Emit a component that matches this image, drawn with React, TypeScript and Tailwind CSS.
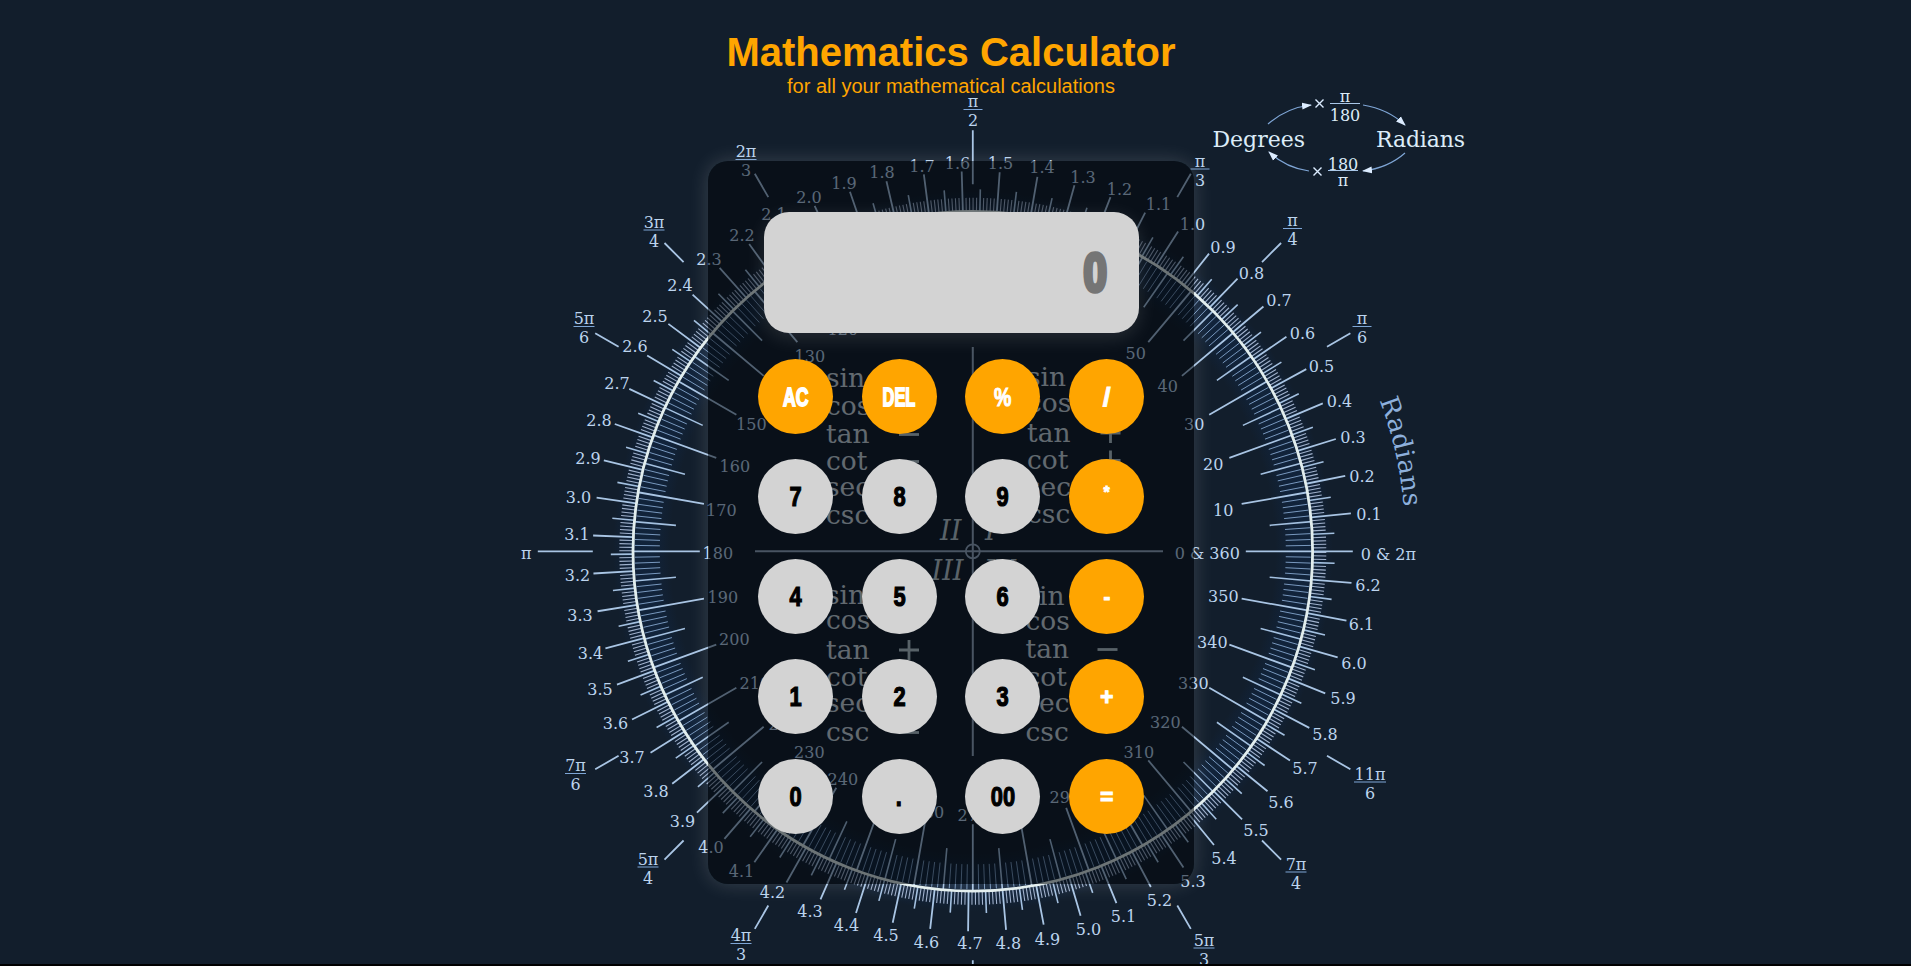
const CX = 972.8;
const CY = 551.3;

type Label = [string, number, number];

const radianLabels: Label[] = [
  ["1.5", 1000.5, 169], ["1.4", 1042, 173.5], ["1.3", 1083, 183], ["1.2", 1119.5, 195], ["1.1", 1158.5, 210.5], ["1.0", 1192.5, 230.5],
  ["0.9", 1223, 253], ["0.8", 1251.5, 279.5], ["0.7", 1279, 306.5], ["0.6", 1302.5, 339], ["0.5", 1321.5, 372], ["0.4", 1339.5, 407],
  ["0.3", 1353, 443.5], ["0.2", 1362, 482], ["0.1", 1369, 520], ["6.2", 1368, 591.5], ["6.1", 1361.5, 630.5], ["6.0", 1354, 669],
  ["5.9", 1343, 704.5], ["5.8", 1325, 740], ["5.7", 1305, 774.5], ["5.6", 1281, 808], ["5.5", 1256, 836.5], ["5.4", 1224, 864],
  ["5.3", 1193, 887], ["5.2", 1159.5, 906], ["5.1", 1123.5, 922.5], ["5.0", 1088.5, 935], ["4.9", 1047.5, 945], ["4.8", 1008.5, 949.5],
  ["4.7", 970, 949.5], ["4.6", 926.5, 948.5], ["4.5", 886, 941.5], ["4.4", 846.5, 931.5], ["4.3", 810, 917.5], ["4.2", 772.5, 898.5],
  ["4.1", 741.5, 877], ["4.0", 711, 853.5], ["3.9", 682.5, 827], ["3.8", 656, 797.5], ["3.7", 632, 763.5], ["3.6", 615.5, 729],
  ["3.5", 600, 695], ["3.4", 590.5, 659], ["3.3", 580, 621], ["3.2", 577.5, 581.5], ["3.1", 577, 540], ["3.0", 578.5, 503],
  ["2.9", 588, 464], ["2.8", 599, 426], ["2.7", 617, 389], ["2.6", 635, 352], ["2.5", 655, 322.5], ["2.4", 680, 291.5],
  ["2.3", 709, 265.5], ["2.2", 742, 241.5], ["2.1", 774, 220], ["2.0", 809, 203.5], ["1.9", 844, 189], ["1.8", 882, 178],
  ["1.7", 922, 172], ["1.6", 957.5, 169.5],
];

const degreeLabels: Label[] = [
  ["50", 1136, 359], ["40", 1168, 392], ["30", 1194.5, 430.5], ["20", 1213.5, 470], ["10", 1223.5, 516],
  ["0 & 360", 1207.5, 559], ["350", 1223.5, 602], ["340", 1212.5, 648.5], ["330", 1193.5, 689], ["320", 1165.5, 728.5], ["310", 1139, 758],
  ["290", 1065, 803], ["270", 973, 821], ["250", 929, 818], ["240", 843, 785], ["230", 809.5, 758], ["220", 784, 730], ["210", 755, 689], ["200", 734.5, 645],
  ["190", 723, 603.5], ["180", 718, 559], ["170", 721.5, 516.5], ["160", 735, 472], ["150", 751.5, 430.5], ["130", 810, 362.5], ["120", 843, 335],
  ["0 & 2π", 1388.5, 560], ["π", 526.5, 559],
];

const fractions: [string, string, number, number][] = [
  ["π", "2", 973, 109], ["2π", "3", 746, 159], ["3π", "4", 654, 229.5], ["5π", "6", 584, 326],
  ["7π", "6", 575.5, 773], ["5π", "4", 648, 866.5], ["4π", "3", 741, 943], ["5π", "3", 1204, 947.5],
  ["7π", "4", 1296, 871.5], ["11π", "6", 1370, 781.5], ["π", "6", 1362, 326], ["π", "4", 1292.5, 228], ["π", "3", 1200, 168.5],
];

const trig = ["sin", "cos", "tan", "cot", "sec", "csc"];
const trigColumns = [
  { x: 826, ys: [387, 414.5, 443, 470, 496, 524], signs: ["", "", "−", "−", "", ""], sx: 909 },
  { x: 1027, ys: [386, 411.5, 441.5, 469, 495.5, 522.5], signs: ["", "", "+", "+", "", ""], sx: 1110.5 },
  { x: 826, ys: [604, 629, 658.5, 686, 712, 741], signs: ["", "", "+", "", "", "−"], sx: 909 },
  { x: 1025.5, ys: [604.5, 629.5, 658, 686, 712, 740.5], signs: ["", "", "−", "", "", ""], sx: 1107.5 },
];

function tick(a: number, r1: number, r2: number) {
  const c = Math.cos(a);
  const s = Math.sin(a);
  return `M${(CX + r1 * c).toFixed(2)} ${(CY - r1 * s).toFixed(2)}L${(CX + r2 * c).toFixed(2)} ${(CY - r2 * s).toFixed(2)}`;
}

function buildTicks() {
  let minor = "";
  let fine = "";
  let mid = "";
  let major = "";
  for (let d = 0; d < 360; d++) {
    const a = (d * Math.PI) / 180;
    if (d % 10 === 0) major += tick(a, 273, 340);
    else if (d % 5 === 0) mid += tick(a, 298, 340);
    else minor += tick(a, 313, 338);
  }
  for (let i = 0; i <= 628; i++) {
    const a = i / 100;
    if (i % 10 === 0) major += tick(a, 340, 380);
    else if (i % 5 === 0) mid += tick(a, 340, 362);
    else fine += tick(a, 340, 353.5);
  }
  [30, 45, 60, 120, 135, 150, 210, 225, 240, 270, 300, 315, 330].forEach((d) => {
    major += tick((d * Math.PI) / 180, 409, 436);
  });
  major += tick(Math.PI / 2, 367, 421) + tick(Math.PI, 380, 435);
  return { minor, fine, mid, major };
}

const ticks = buildTicks();

function UnitCircle() {
  return (
    <svg className="absolute inset-0 h-[964px] w-full" viewBox="0 0 1911 964" fontFamily="'DejaVu Serif', serif" fill="#bcd4ee">
      <defs>
        <marker id="tip" viewBox="0 0 10 8" refX="9" refY="4" markerWidth="10" markerHeight="8" markerUnits="userSpaceOnUse" orient="auto">
          <path d="M0 0.5L10 4L0 7.5z" fill="#dcecff" />
        </marker>
        <radialGradient id="halo" gradientUnits="userSpaceOnUse" cx={CX} cy={CY} r="360">
          <stop offset="0.84" stopColor="#0f2f5c" stopOpacity="0" />
          <stop offset="0.89" stopColor="#0f2f5c" stopOpacity="0.3" />
          <stop offset="0.96" stopColor="#0f2f5c" stopOpacity="0.3" />
          <stop offset="1" stopColor="#0f2f5c" stopOpacity="0" />
        </radialGradient>
      </defs>
      <circle cx={CX} cy={CY} r="360" fill="url(#halo)" />
      <g fill="none">
        <path d={ticks.minor} stroke="#7898be" strokeWidth="1" />
        <path d={ticks.fine} stroke="#a0b1cc" strokeWidth="1.1" />
        <path d={ticks.mid} stroke="#a3c0e0" strokeWidth="1.6" />
        <path d={ticks.major} stroke="#a9c5e4" strokeWidth="1.8" />
        <circle cx={CX} cy={CY} r="339.8" stroke="#e2eeee" strokeWidth="2.8" />
        <path d="M755 551.3H1163M972.8 347V756" stroke="#98acc4" strokeWidth="2" />
        <circle cx={CX} cy={CY} r="7" stroke="#98acc4" strokeWidth="1.8" />
      </g>

      <g fontSize="16" textAnchor="middle">
        {radianLabels.map(([t, x, y]) => (
          <text key={t} x={x} y={y - 0.2}>{t}</text>
        ))}
        {degreeLabels.map(([t, x, y]) => (
          <text key={t} x={x - 0.2} y={y - 0.4}>{t}</text>
        ))}
        {fractions.map(([n, d, x, y]) => (
          <g key={n + d}>
            <text x={x} y={y - 2}>{n}</text>
            <path d={`M${x - (n.length === 3 ? 16 : n.length === 2 ? 10.5 : 9.5)} ${y + 0.5}h${n.length === 3 ? 32 : n.length === 2 ? 21 : 19}`} stroke="#7ea6d6" />
            <text x={x} y={y + 17}>{d}</text>
          </g>
        ))}
      </g>

      <g fontSize="26.5" fill="#ccd8e0">
        {trigColumns.map((col, c) =>
          trig.map((t, i) => (
            <g key={`${c}${t}`}>
              <text x={col.x} y={col.ys[i]}>{t}</text>
              {col.signs[i] && <path d={`M${col.sx - 10} ${col.ys[i] - 8.5}h20${col.signs[i] === "+" ? "m-10 -10v20" : ""}`} stroke="#b8c8d2" strokeWidth="2.8" fill="none" />}
            </g>
          )),
        )}
      </g>
      <g fontSize="27" fontStyle="italic" fill="#bccad4">
        <text x="940" y="540">II</text>
        <text x="985" y="540">I</text>
        <text x="931.5" y="580">III</text>
        <text x="984" y="580">IV</text>
      </g>

      <g fill="#dcecf8">
        <g fontSize="22">
          <text x="1212.5" y="146.5" textLength="92.5">Degrees</text>
          <text x="1376" y="146.5" textLength="89">Radians</text>
        </g>
        <g fontSize="16" textAnchor="middle">
          <text x="1345" y="101.5">π</text>
          <text x="1345" y="120.5">180</text>
          <text x="1343" y="169.5">180</text>
          <text x="1343" y="186">π</text>
        </g>
        <path d="M1330 103.5h30M1328 170.500h30" stroke="#a9c7e8" />
        <path d="M1315.5 99.5l8 8m0-8l-8 8M1313.5 167.5l8 8m0-8l-8 8" stroke="#dcecff" strokeWidth="1.4" />
        <g fill="none" stroke="#7fa6d6" strokeWidth="1.2">
          <path d="M1268 124Q1286 108 1311 105" markerEnd="url(#tip)" />
          <path d="M1363 105Q1388 109 1405 125" markerEnd="url(#tip)" />
          <path d="M1405 153Q1388 168 1363 171" markerEnd="url(#tip)" />
          <path d="M1309 171Q1286 168 1269 152" markerEnd="url(#tip)" />
        </g>
      </g>
      <path id="arc" fill="none" d="M1379.5 400.5Q1399 450 1404 510" />
      <text fontSize="26" fill="#8db0dc">
        <textPath href="#arc" textLength="109.5">Radians</textPath>
      </text>
    </svg>
  );
}

const keys = ["AC", "DEL", "%", "/", "7", "8", "9", "*", "4", "5", "6", "-", "1", "2", "3", "+", "0", ".", "00", "="];

const operatorGlyphs: Record<string, string> = {
  AC: "text-[26px] scale-x-[.68] [-webkit-text-stroke:1.8px_white]",
  DEL: "text-[26px] scale-x-[.63] [-webkit-text-stroke:1.8px_white]",
  "%": "text-[26px] scale-x-[.75] [-webkit-text-stroke:1px_white]",
  "/": "text-[26px] scale-x-[1.1] [-webkit-text-stroke:0.8px_white]",
  "*": "text-[16px] -translate-y-1 [-webkit-text-stroke:0.8px_white]",
  "-": "text-[24px] scale-x-[.85] [-webkit-text-stroke:1px_white]",
  "+": "text-[23px] scale-x-[.97] translate-y-px [-webkit-text-stroke:1.2px_white]",
  "=": "text-[23px] scale-x-[.97] translate-y-px [-webkit-text-stroke:1.2px_white]",
};

function Key({ label }: { label: string }) {
  const operator = operatorGlyphs[label];
  return (
    <button className={`flex size-[75px] items-center justify-center rounded-full leading-none font-bold ${operator ? "bg-[orange] text-white" : "bg-[#d3d3d3] text-black"}`}>
      <span className={`inline-block ${operator ?? "text-[27px] scale-x-[.81] translate-y-[0.5px] [-webkit-text-stroke:1.2px_black]"}`}>{label}</span>
    </button>
  );
}

export default function App() {
  return (
    <div className="relative h-[966px] w-full overflow-hidden border-b-2 border-black bg-[#121e2c] font-['Liberation_Sans',Arial,sans-serif]">
      <UnitCircle />
      <main className="relative flex flex-col items-center pr-[9px]">
        <header className="flex h-[161px] flex-col items-center pt-7 text-[orange]">
          <h1 className="text-[40px] leading-[48px] font-bold">Mathematics Calculator</h1>
          <p className="-mt-px text-[20px] leading-[22px]">for all your mathematical calculations</p>
        </header>
        <section className="flex h-[723px] w-[486px] flex-col items-center rounded-[20px] bg-[#000308]/52 pt-[51px] shadow-[0_0_20px_rgba(255,255,255,0.17)]">
          <div className="flex h-[121px] w-[375px] items-center justify-end rounded-[25px] bg-[#d3d3d3] pr-[31px] pb-0.5 text-[54px] leading-none font-bold text-[#757575] shadow-[0_5px_20px_rgba(255,255,255,0.12)]">
            <span className="inline-block origin-right scale-x-[.78] [-webkit-text-stroke:4.6px_#757575]">0</span>
          </div>
          <div className="mt-[26px] grid grid-cols-4 gap-x-[28.7px] gap-y-[25px]">
            {keys.map((k) => (
              <Key key={k} label={k} />
            ))}
          </div>
        </section>
      </main>
    </div>
  );
}
